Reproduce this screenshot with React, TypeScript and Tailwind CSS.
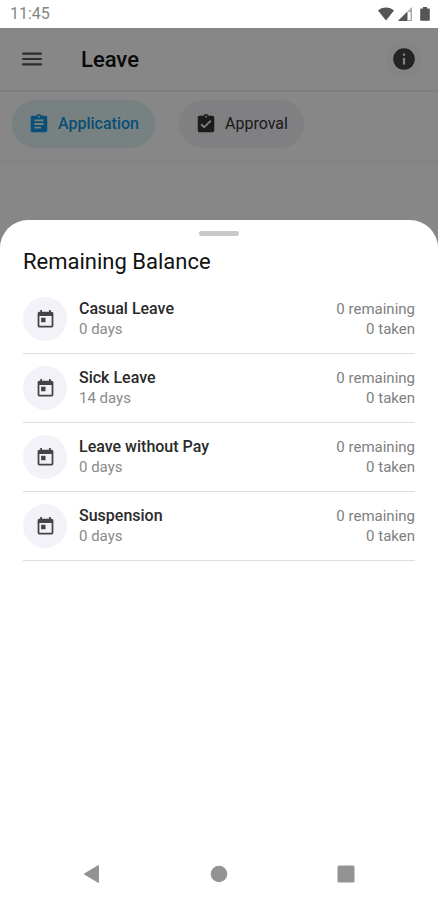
import { useState } from "react";
import clsx from "clsx";
import {
  MdAssignment, MdAssignmentTurnedIn, MdInfo, MdMenu, MdToday,
} from "react-icons/md";

type Tab = "application" | "approval";

interface LeaveBalance {
  name: string;
  days: number;
  remaining: number;
  taken: number;
}

const BALANCES: LeaveBalance[] = [
  { name: "Casual Leave", days: 0, remaining: 0, taken: 0 },
  { name: "Sick Leave", days: 14, remaining: 0, taken: 0 },
  { name: "Leave without Pay", days: 0, remaining: 0, taken: 0 },
  { name: "Suspension", days: 0, remaining: 0, taken: 0 },
];

const TABS = [
  { id: "application" as Tab, label: "Application", icon: <MdAssignment size={22} /> },
  { id: "approval" as Tab, label: "Approval", icon: <MdAssignmentTurnedIn size={22} /> },
];

function StatusBar() {
  return (
    <div className="h-7 shrink-0 pl-[10px] pr-2 flex items-center justify-between text-[#858585]">
      <span className="text-base">11:45</span>
      <div className="flex items-center gap-1">
        <svg width="16" height="14" viewBox="0 0 16 14" fill="#555">
          <path d="M0 3.6C2.2 1.6 5 .5 8 .5s5.8 1.1 8 3.1L8 13.5z" />
        </svg>
        <svg width="14" height="14" viewBox="0 0 14 14">
          <path d="M14 0v14H0z" fill="#aaa" />
          <path d="M9 5v9H0z" fill="#555" />
          <path d="M10 5h2.500v8H10z" fill="#fff" />
        </svg>
        <svg className="ml-1" width="10" height="14" viewBox="0 0 10 14" fill="#555">
          <path d="M3 0h4v1.500h1.800c.6 0 1 .4 1 1v10.300c0 .6-.4 1-1 1H1.200c-.6 0-1-.4-1-1V2.500c0-.6.4-1 1-1H3z" />
        </svg>
      </div>
    </div>
  );
}

function BalanceRow({ item }: { item: LeaveBalance }) {
  return (
    <li className="flex items-center gap-3 py-3 border-b border-[#dedede]">
      <div className="size-11 shrink-0 rounded-full bg-[#f2f2f8] text-[#444] flex items-center justify-center">
        <MdToday size={21} />
      </div>
      <div className="flex-1 min-w-0">
        <div className="text-base leading-5 font-medium text-[#2a2a2a]">{item.name}</div>
        <div className="text-[15px] leading-5 text-[#8a8a8a]">{item.days} days</div>
      </div>
      <div className="text-right text-[15px] leading-5 text-[#808080]">
        <div>{item.remaining} remaining</div>
        <div>{item.taken} taken</div>
      </div>
    </li>
  );
}

function SystemNav() {
  return (
    <nav className="flex items-center justify-around px-7 pb-[13px] text-[#939393]">
      <button aria-label="Back" className="p-1">
        <svg width="18" height="18" viewBox="0 0 18 18" fill="currentColor">
          <path d="M16 .8v16.400c0 .6-.5.8-1 .5L1.200 9.600c-.5-.3-.5-.9 0-1.200L15 .3c.5-.3 1-.1 1 .5z" />
        </svg>
      </button>
      <button aria-label="Home" className="p-1">
        <svg width="18" height="18" viewBox="0 0 18 18" fill="currentColor">
          <circle cx="9" cy="9" r="8.300" />
        </svg>
      </button>
      <button aria-label="Recent apps" className="p-1">
        <svg width="18" height="18" viewBox="0 0 18 18" fill="currentColor">
          <rect x=".5" y=".5" width="17" height="17" rx="1.500" />
        </svg>
      </button>
    </nav>
  );
}

export default function App() {
  const [tab, setTab] = useState<Tab>("application");

  return (
    <div className="min-h-screen flex flex-col bg-white font-[Roboto,sans-serif]">
      <StatusBar />

      <div className="relative flex-1 flex flex-col">
        {/* Header */}
        <header className="h-16 pl-[19px] pr-4 flex items-center border-b-2 border-[#efefef]">
          <button aria-label="Menu" className="text-[#555]">
            <MdMenu size={26} />
          </button>
          <h1 className="ml-9 text-[22px] font-medium text-[#111]">Leave</h1>
          <button
            aria-label="Leave balance"
            className="ml-auto size-9 rounded-full bg-[#fafafd] text-[#444] flex items-center justify-center"
          >
            <MdInfo size={26} />
          </button>
        </header>

        {/* Tabs */}
        <div className="px-3 pt-2 pb-3 flex gap-6 border-b-4 border-[#f7f7f7]">
          {TABS.map((t) => (
            <button
              key={t.id}
              onClick={() => setTab(t.id)}
              className={clsx(
                "h-12 px-4 rounded-full flex items-center gap-2 text-base",
                tab === t.id ? "bg-[#e2f3f6] text-[#1296de] font-medium" : "bg-[#f2f2f8] text-[#333]",
              )}
            >
              {t.icon}
              {t.label}
            </button>
          ))}
        </div>

        {/* Scrim */}
        <div className="absolute inset-0 bg-black/47" />

        {/* Bottom sheet */}
        <section className="relative mt-14 flex-1 flex flex-col rounded-t-[28px] bg-white">
          <div className="mt-[11px] mx-auto h-[5px] w-10 rounded-full bg-[#c8c8c8]" />
          <div className="flex-1 px-[23px] pt-3">
            <h2 className="text-[22px] leading-7 text-[#111]">Remaining Balance</h2>
            <ul className="mt-[9px]">
              {BALANCES.map((b) => (
                <BalanceRow key={b.name} item={b} />
              ))}
            </ul>
          </div>
          <SystemNav />
        </section>
      </div>
    </div>
  );
}
